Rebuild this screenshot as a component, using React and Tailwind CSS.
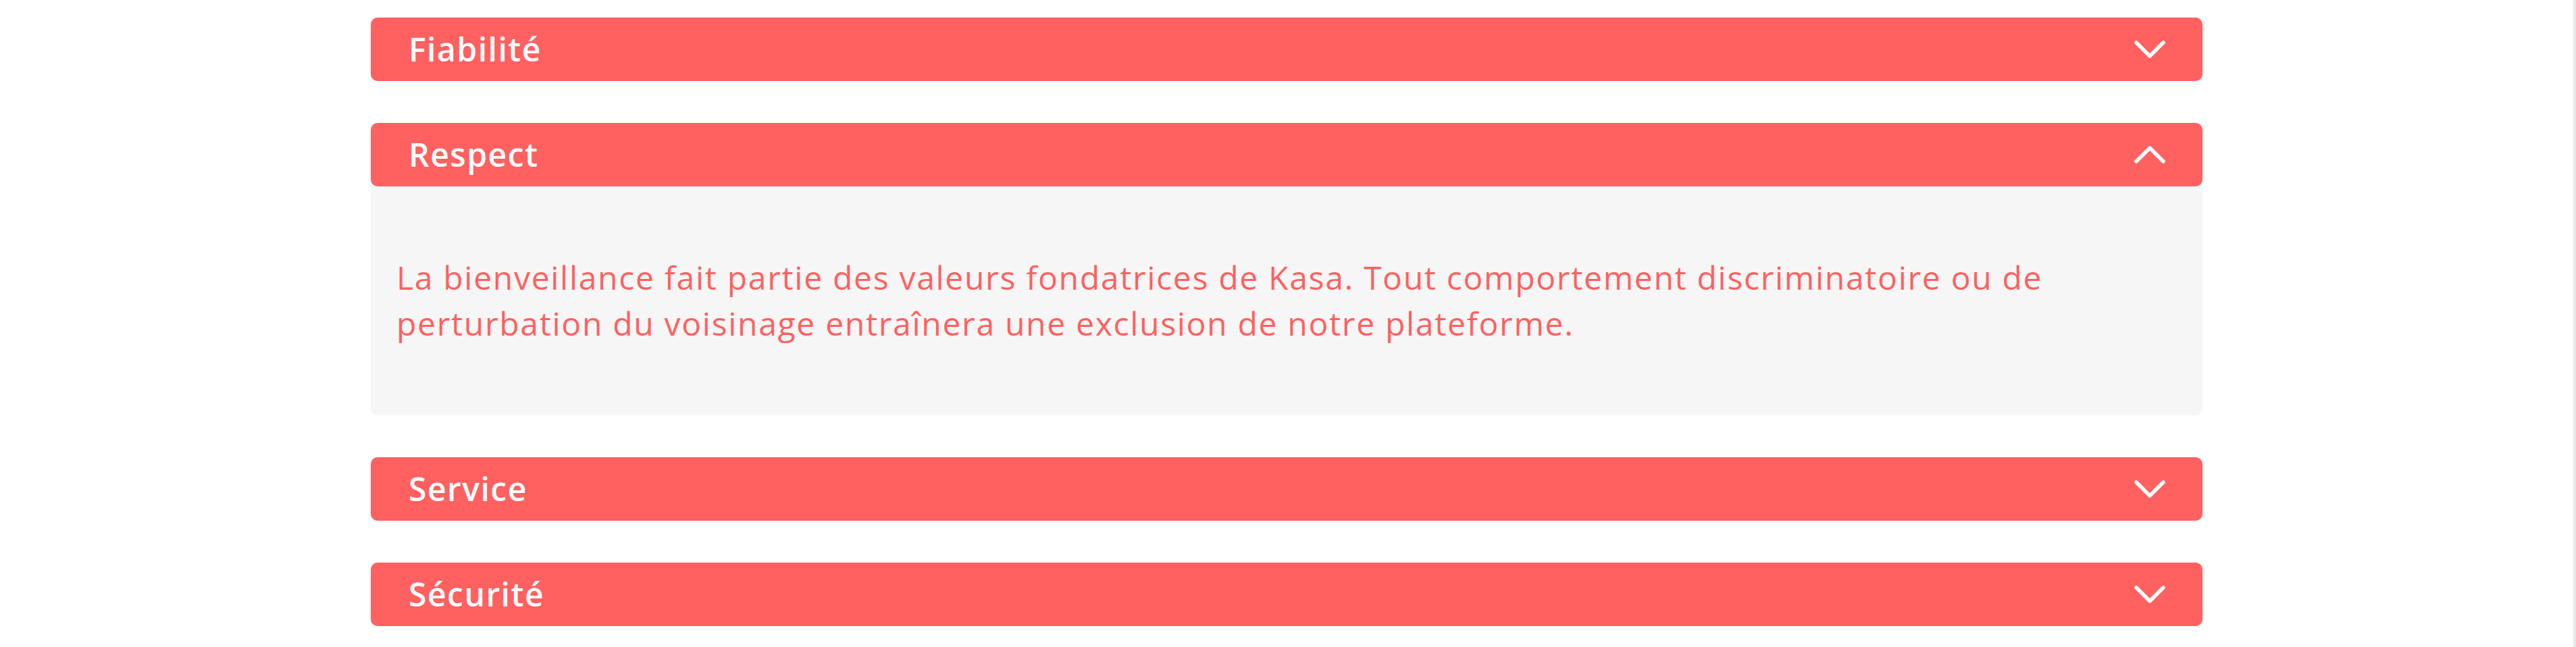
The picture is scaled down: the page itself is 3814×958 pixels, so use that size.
import React from "react";

const Chevron = ({ up }) => (
  <svg width="48" height="28" viewBox="0 0 48 28" className={up ? "rotate-180" : ""}>
    <polyline points="4,4 24,24 44,4" fill="none" stroke="#ffffff" strokeWidth="5.5" strokeLinecap="round" strokeLinejoin="round" />
  </svg>
);

const Bar = ({ title, up }) => (
  <div className="flex h-[94px] items-center justify-between rounded-[10px] bg-[#FF6060] pl-[56px] pr-[54px] text-white">
    <span className="text-[48px] font-semibold leading-none tracking-[1.5px]">{title}</span>
    <Chevron up={up} />
  </div>
);

export default function App() {
  return (
    <div className="flex h-[958px] w-full bg-white" style={{ fontFamily: '"Open Sans", "Liberation Sans", sans-serif' }}>
      <div className="flex flex-1 justify-center">
        <div className="flex w-[2712px] flex-col gap-[62px] pt-[26px]">
          <Bar title="Fiabilité" />
          <div className="flex flex-col">
            <Bar title="Respect" up />
            <div className="rounded-b-[10px] bg-[#F6F6F6] pl-[38px] pr-[38px] pt-[101px] pb-[102px]">
              <p className="text-[48px] font-normal leading-[68px] tracking-[1.7px] text-[#FF6060]">
                La bienveillance fait partie des valeurs fondatrices de Kasa. Tout comportement discriminatoire ou de
                <br />
                perturbation du voisinage entraînera une exclusion de notre plateforme.
              </p>
            </div>
          </div>
          <Bar title="Service" />
          <Bar title="Sécurité" />
        </div>
      </div>
      <div className="w-[4px] bg-[#e8e8e8]" />
    </div>
  );
}
